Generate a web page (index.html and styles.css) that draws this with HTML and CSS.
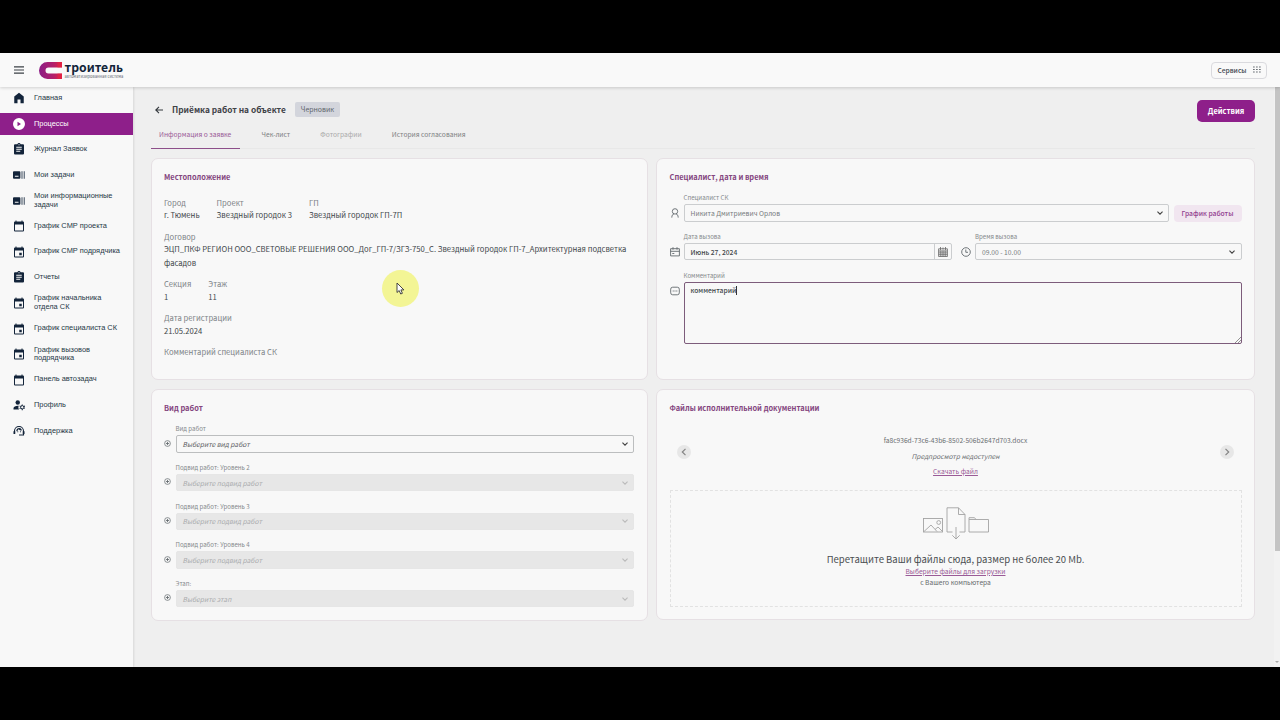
FILE: index.html
```
<!DOCTYPE html>
<html lang="ru">
<head>
<meta charset="utf-8">
<title>Приёмка работ на объекте</title>
<link rel="stylesheet" href="styles.css">
</head>
<body>
<svg class="defs" width="0" height="0">
  <defs>
    <linearGradient id="magnet" x1="0" x2="1"><stop offset="0" stop-color="#8c1d86"/><stop offset=".6" stop-color="#b01f6c"/><stop offset="1" stop-color="#e02045"/></linearGradient>
    <symbol id="i-home" viewBox="0 0 24 24"><path d="M12 1.500 2.500 9V22.500H9V15h6v7.500h6.500V9z"/></symbol>
    <symbol id="i-play" viewBox="0 0 24 24"><path fill-rule="evenodd" d="M12 0a12 12 0 1 0 0 24a12 12 0 0 0 0-24zM9 7.500v9l7-4.500z"/></symbol>
    <symbol id="i-clip" viewBox="0 0 24 24"><path fill-rule="evenodd" d="M20 2.500h-4.700a3.400 3.400 0 0 0-6.600 0H4a2 2 0 0 0-2 2V21a2 2 0 0 0 2 2h16a2 2 0 0 0 2-2V4.500a2 2 0 0 0-2-2zM11 2.500h2v2h-2zM6.500 7.500h11v2h-11zM6.500 11.500h11v2h-11zM6.500 15.500h8v2h-8z"/></symbol>
    <symbol id="i-tasks" viewBox="0 0 26 24"><path fill-rule="evenodd" d="M2 4h12a2 2 0 0 1 2 2v12a2 2 0 0 1-2 2H2a2 2 0 0 1-2-2V6a2 2 0 0 1 2-2zM4 13.500h8v2.500H4z"/><path opacity=".6" d="M18 4h3v16h-3zM23 4h3v16h-3z"/></symbol>
    <symbol id="i-cal" viewBox="0 0 24 24"><path fill-rule="evenodd" d="M5 1h2v2h10V1h2v2h1a2 2 0 0 1 2 2v16a2 2 0 0 1-2 2H4a2 2 0 0 1-2-2V5a2 2 0 0 1 2-2h1zM4 9v12h16V9z"/></symbol>
    <symbol id="i-event" viewBox="0 0 24 24"><path fill-rule="evenodd" d="M5 1h2v2h10V1h2v2h1a2 2 0 0 1 2 2v16a2 2 0 0 1-2 2H4a2 2 0 0 1-2-2V5a2 2 0 0 1 2-2h1zM4 9v12h16V9zM12.500 13.500h5v5h-5z"/></symbol>
    <symbol id="i-user" viewBox="0 0 24 24"><circle cx="9.500" cy="7" r="4.500"/><path d="M1 21v-2.500c0-3 4-5 9-5h1.500c-1.200 2.300-1 5 .5 7.500z"/><circle cx="18.500" cy="16.500" r="3.300" fill="none" stroke="currentColor" stroke-width="2"/><path d="M17.500 11h2v2h-2zM17.500 20h2v2.300h-2zM12.800 14.500l1-1.700 2 1-1 1.700zM21.300 18.600l1-1.700 2 1-1 1.700zM12.800 18.500l2-1.200 1 1.700-2 1.200zM21.300 14.200l2-1.200 1 1.700-2 1.200z"/></symbol>
    <symbol id="i-support" viewBox="0 0 24 24"><path fill="none" stroke="currentColor" stroke-width="2.200" d="M3 16v-4a9 9 0 0 1 18 0v8h-9"/><path d="M1 12.500h3.500V18H1zM19.500 12.500H23V18h-3.500z"/><path d="M6.500 12.500c.3-4 2.500-6.300 6-6.300 2.700 0 4.700 1.700 5.200 4.800-3 0-5-1-6.400-3.200-.7 2.200-2.300 3.900-4.800 4.700z"/><circle cx="9.500" cy="13.500" r="1.200"/><circle cx="15" cy="13.500" r="1.200"/></symbol>
    <symbol id="i-chev" viewBox="0 0 10 10"><path fill="none" stroke="currentColor" stroke-width="1.400" d="M1.800 3.200 5 6.400 8.200 3.200"/></symbol>
    <symbol id="i-plus" viewBox="0 0 14 14"><circle cx="7" cy="7" r="5.800" fill="none" stroke="currentColor" stroke-width="1.400"/><path fill="none" stroke="currentColor" stroke-width="1.700" d="M7 3.800v6.400M3.800 7h6.400"/></symbol>
    <symbol id="i-person" viewBox="0 0 10 10"><g fill="none" stroke="currentColor" stroke-width=".9"><circle cx="5" cy="3.400" r="2.700"/><path d="M1.800 9.600c0-2.300 1-3.400 2.200-3.800M8.200 9.600c0-2.300-1-3.400-2.200-3.800"/></g></symbol>
    <symbol id="i-date" viewBox="0 0 10 10"><g fill="none" stroke="currentColor" stroke-width=".9"><path d="M.6 1.700h8.800v7.200H.6zM.6 4.300h8.800M3 .2v2.500M7 .2v2.500M2.300 6.500h2"/></g></symbol>
    <symbol id="i-clock" viewBox="0 0 10 10"><g fill="none" stroke="currentColor" stroke-width=".9"><circle cx="5" cy="5" r="4.300"/><path d="M4.800 2.500v2.800h2.200"/></g></symbol>
    <symbol id="i-note" viewBox="0 0 10 10"><rect x=".7" y="1.200" width="8.600" height="7.600" rx="2" fill="none" stroke="currentColor" stroke-width=".9"/><path d="M2.700 4.500h1v1h-1zM4.500 4.500h1v1h-1zM6.300 4.500h1v1h-1z"/></symbol>
    <symbol id="i-month" viewBox="0 0 10 10"><path fill="none" stroke="currentColor" stroke-width=".8" d="M.6 1.800h8.800v7.700H.6zM2.500 0v3M7.500 0v3M5 .5v2M.6 4h8.800M.6 5.900h8.800M.6 7.700h8.800M2.800 3.500v6M5 3.500v6M7.200 3.500v6"/></symbol>
  </defs>
</svg>

<div class="app">
  <header class="topbar">
    <svg class="burger" viewBox="0 0 10 8"><path d="M0 .9h10M0 4h10M0 7.100h10" stroke="#3b4046" stroke-width="1.100"/></svg>
    <div class="logo">
      <svg class="logo-mark" viewBox="0 0 23 17"><path fill="url(#magnet)" d="M8.500 0H23v5.500H9.500a3 3 0 0 0 0 6H23V17H8.500a8.500 8.500 0 0 1 0-17z"/><path fill="#e8243f" d="M18.500 11.500H23V17h-4.500zM18.500 0H23v5.500h-4.500z" opacity=".55"/></svg>
      <div class="logo-text"><span class="logo-name">троитель</span><span class="logo-sub">автоматизированная система</span></div>
    </div>
    <div class="services">Сервисы <svg viewBox="0 0 8 7"><path d="M.2 1h7.600M.2 3.500h7.600M.2 6h7.600" stroke="#4a5058" stroke-width="1.100" stroke-dasharray="1.400 1.600"/></svg></div>
  </header>

  <div class="body">
    <nav class="sidebar">
      <a class="item"><svg><use href="#i-home"/></svg><span>Главная</span></a>
      <a class="item active"><svg><use href="#i-play"/></svg><span>Процессы</span></a>
      <a class="item"><svg><use href="#i-clip"/></svg><span>Журнал Заявок</span></a>
      <a class="item"><svg><use href="#i-tasks"/></svg><span>Мои задачи</span></a>
      <a class="item"><svg><use href="#i-tasks"/></svg><span>Мои информационные<br>задачи</span></a>
      <a class="item"><svg><use href="#i-cal"/></svg><span>График СМР проекта</span></a>
      <a class="item"><svg><use href="#i-event"/></svg><span>График СМР подрядчика</span></a>
      <a class="item"><svg><use href="#i-clip"/></svg><span>Отчеты</span></a>
      <a class="item"><svg><use href="#i-event"/></svg><span>График начальника<br>отдела СК</span></a>
      <a class="item"><svg><use href="#i-event"/></svg><span>График специалиста СК</span></a>
      <a class="item"><svg><use href="#i-event"/></svg><span>График вызовов<br>подрядчика</span></a>
      <a class="item"><svg><use href="#i-cal"/></svg><span>Панель автозадач</span></a>
      <a class="item"><svg><use href="#i-user"/></svg><span>Профиль</span></a>
      <a class="item"><svg><use href="#i-support"/></svg><span>Поддержка</span></a>
    </nav>

    <main class="main">
      <div class="heading">
        <svg class="back" viewBox="0 0 8 8"><path d="M8 4H1M4 .8.8 4 4 7.200" fill="none" stroke="#33383d" stroke-width="1.100"/></svg>
        <h1>Приёмка работ на объекте</h1>
        <span class="badge">Черновик</span>
        <button class="btn-primary">Действия</button>
      </div>
      <div class="tabs">
        <span class="tab current">Информация о заявке</span>
        <span class="tab t2">Чек-лист</span>
        <span class="tab t3">Фотографии</span>
        <span class="tab t4">История согласования</span>
      </div>

      <div class="cards">
        <section class="card left">
          <h2>Местоположение</h2>
          <div class="info">
            <div class="row">
              <dl><dt>Город</dt><dd>г. Тюмень</dd></dl>
              <dl><dt>Проект</dt><dd>Звездный городок 3</dd></dl>
              <dl><dt>ГП</dt><dd>Звездный городок ГП-7П</dd></dl>
            </div>
            <dl><dt>Договор</dt><dd>ЭЦП_ПКФ РЕГИОН ООО_СВЕТОВЫЕ РЕШЕНИЯ ООО_Дог_ГП-7/ЗГЗ-750_С. Звездный городок ГП-7_Архитектурная подсветка<br>фасадов</dd></dl>
            <div class="row">
              <dl><dt>Секция</dt><dd>1</dd></dl>
              <dl><dt>Этаж</dt><dd>11</dd></dl>
            </div>
            <dl><dt>Дата регистрации</dt><dd>21.05.2024</dd></dl>
            <dl><dt>Комментарий специалиста СК</dt></dl>
          </div>
        </section>

        <section class="card">
          <h2>Специалист, дата и время</h2>
          <div class="form">
            <div class="line">
              <svg class="ficon"><use href="#i-person"/></svg>
              <div class="field grow"><label>Специалист СК</label><div class="box muted">Никита Дмитриевич Орлов<svg class="chev"><use href="#i-chev"/></svg></div></div>
              <button class="btn-soft">График работы</button>
            </div>
            <div class="line">
              <svg class="ficon"><use href="#i-date"/></svg>
              <div class="field date"><label>Дата вызова</label><div class="box strong">Июнь 27, 2024<span class="addon"><svg><use href="#i-month"/></svg></span></div></div>
              <svg class="ficon clock"><use href="#i-clock"/></svg>
              <div class="field grow"><label>Время вызова</label><div class="box muted">09.00 - 10.00<svg class="chev"><use href="#i-chev"/></svg></div></div>
            </div>
            <div class="line">
              <svg class="ficon top"><use href="#i-note"/></svg>
              <div class="field grow"><label>Комментарий</label><div class="area"><span class="typed">комментарий</span><svg class="grip" viewBox="0 0 6 6"><path d="M0 6 6 0M3 6 6 3" stroke="#666" stroke-width=".7"/></svg></div></div>
            </div>
          </div>
        </section>

        <section class="card left works">
          <h2>Вид работ</h2>
          <div class="form">
            <div class="line"><svg class="ficon"><use href="#i-plus"/></svg><div class="field grow"><label>Вид работ</label><div class="box dark">Выберите вид работ<svg class="chev"><use href="#i-chev"/></svg></div></div></div>
            <div class="line"><svg class="ficon"><use href="#i-plus"/></svg><div class="field grow"><label>Подвид работ: Уровень 2</label><div class="box off">Выберите подвид работ<svg class="chev"><use href="#i-chev"/></svg></div></div></div>
            <div class="line"><svg class="ficon"><use href="#i-plus"/></svg><div class="field grow"><label>Подвид работ: Уровень 3</label><div class="box off">Выберите подвид работ<svg class="chev"><use href="#i-chev"/></svg></div></div></div>
            <div class="line"><svg class="ficon"><use href="#i-plus"/></svg><div class="field grow"><label>Подвид работ: Уровень 4</label><div class="box off">Выберите подвид работ<svg class="chev"><use href="#i-chev"/></svg></div></div></div>
            <div class="line"><svg class="ficon"><use href="#i-plus"/></svg><div class="field grow"><label>Этап:</label><div class="box off">Выберите этап<svg class="chev"><use href="#i-chev"/></svg></div></div></div>
          </div>
        </section>

        <section class="card files">
          <h2>Файлы исполнительной документации</h2>
          <div class="carousel">
            <span class="nav"><svg viewBox="0 0 8 8"><path d="M5.500.8 2.300 4l3.200 3.200"/></svg></span>
            <div class="file"><span>fa8c936d-73c6-43b6-8502-506b2647d703.docx</span><em>Предпросмотр недоступен</em><a>Скачать файл</a></div>
            <span class="nav"><svg viewBox="0 0 8 8"><path d="M2.500.8 5.700 4 2.500 7.200"/></svg></span>
          </div>
          <div class="drop">
            <svg class="drop-art" viewBox="0 0 66 33"><g fill="none" stroke="#a3a3a3" stroke-width=".9"><rect x=".5" y="11.500" width="19" height="13.500"/><circle cx="15.700" cy="15.500" r="1.900"/><path d="m1 24.500 7-6.500 6 6.500M12 22.500l3-2.500 4.500 4.500M29.500 25H24V.8h11.500L42 7.500V25h-5.500M35.500.8v6.700H42M33 20v12M29.300 28.300 33 32l3.700-3.700M46 25V10.700h5.500l1.500 1.800h12.500V25zM46 12.500h7"/></g></svg>
            <p class="drop-title">Перетащите Ваши файлы сюда, размер не более 20 Mb.</p>
            <a>Выберите файлы для загрузки</a>
            <p class="drop-note">с Вашего компьютера</p>
          </div>
        </section>
      </div>
    </main>
    <div class="scroll"><span class="thumb"></span><span class="down"></span></div>
  </div>

  <div class="pointer"><svg viewBox="0 0 9 13"><path d="M1 1v9.500l2.200-2 1.500 3.500 1.700-.7-1.500-3.400h3z" fill="#fff" stroke="#333" stroke-width=".9"/></svg></div>
</div>
</body>
</html>
```
FILE: styles.css
```
* { box-sizing: border-box; }
body { margin: 0; background: #000; height: 720px; overflow: hidden; padding-top: 53px;
  font-family: "Noto Sans CJK JP", "Noto Sans", sans-serif; font-size: 7.65px; color: #41474b; }
h1, h2, p, dl, dd { margin: 0; }
button { font-family: inherit; border: 0; padding: 0; }
.defs { position: absolute; }
svg { fill: currentColor; flex: none; }

.app { position: relative; width: 1280px; height: 614px; background: #efefef; display: flex; flex-direction: column; overflow: hidden; }
.topbar { height: 34px; flex: none; background: #f9f9f9; display: flex; align-items: center; padding: 0 13px 0 14px; box-shadow: 0 1px 3px rgba(0,0,0,.16); z-index: 2; }
.burger { width: 10px; height: 8px; }
.logo { display: flex; gap: 3px; margin-left: 14.500px; align-items: center; }
.logo-mark { width: 23px; height: 17px; }
.logo-text { display: flex; flex-direction: column; color: #12253a; margin-top: -1px; }
.logo-name { font-size: 12.2px; font-weight: 700; line-height: 13px; }
.logo-sub { font-size: 4px; line-height: 4px; color: #5d6670; white-space: nowrap; }
.services { margin-left: auto; width: 56px; height: 17px; border: 1px solid #dadade; border-radius: 4px; display: flex; align-items: center; justify-content: center; gap: 6px; font-size: 6.700px; font-weight: 500; color: #3f4750; white-space: nowrap; }
.services svg { width: 8px; height: 7px; margin-top: -1px; }

.body { flex: 1; display: flex; min-height: 0; }
.sidebar { width: 133px; flex: none; background: #f8f8f8; margin-right: 1px; box-shadow: 1px 0 2px rgba(0,0,0,.1); }
.item { display: flex; align-items: center; height: 25.600px; padding-left: 13px; color: #13243a; font: 7.41px/8.600px "Liberation Sans", sans-serif; }
.item:first-child { margin-top: -1.600px; }
.item svg { width: 12px; height: 12px; margin-right: 9px; }
.item span { color: #263847; white-space: nowrap; }
.item.active { height: 21.600px; margin: 2px 0; background: #8e1f8a; color: #fff; }
.item.active span { color: #fff; }

.main { flex: 1; padding: 10px 19px 0 17px; }
.heading { display: flex; align-items: center; height: 26px; padding-left: 4px; }
.back { width: 8px; height: 8px; margin-right: 9px; margin-top: -1px; }
h1 { font-size: 8.340px; font-weight: 700; color: #3f4247; line-height: 14px; width: 114px; white-space: nowrap; margin-top: -2px; }
.badge { margin: -2px 0 0 9px; width: 45px; height: 15px; border-radius: 2px; background: #d3d5dc; color: #5f656d; font-size: 6.900px; line-height: 14px; text-align: center; }
.btn-primary { margin-left: auto; width: 58px; height: 22px; border-radius: 5px; background: #8e1f8a; color: #fff; font-weight: 700; font-size: 7.450px; line-height: 19px; padding-bottom: 2px; margin-top: 2px; }
.tabs { height: 26px; display: flex; border-bottom: 1px solid #e8e8e8; font-size: 6.670px; line-height: 23px; color: #7d7f82; white-space: nowrap; }
.tab { padding: 0 8px; height: 26px; }
.tab.current { width: 89px; color: #9a5a96; border-bottom: 1px solid #8d4f8a; }
.t2 { margin-left: 13.500px; }
.t3 { margin-left: 14px; color: #aaa; }
.t4 { margin-left: 14.200px; }

.cards { display: grid; grid-template-columns: 497px 599px; grid-template-rows: 222px 232px; gap: 9px 8px; margin-top: 9px; }
.card { background: #f8f8f8; border: 1px solid #e6e0e4; border-radius: 7px; padding: 11px 12.500px 0; }
.left { padding: 11px 13px 0 12px; }
.files { height: 231px; }
h2 { font-size: 7.440px; font-weight: 700; line-height: 14px; color: #84467f; white-space: nowrap; }
.info { margin-top: 12.500px; display: flex; flex-direction: column; gap: 9px; white-space: nowrap; }
.row { display: flex; gap: 17px; }
dt { line-height: 12.600px; color: #7c8286; }
dd { line-height: 13.200px; margin: -.8px 0 0; }

.form { margin-top: 9.300px; display: flex; flex-direction: column; gap: 10.300px; }
.line { display: flex; align-items: flex-end; }
.ficon { width: 10px; height: 10px; margin: 0 4px 3.500px 0; color: #62696d; }
.ficon.top { align-self: flex-start; margin-top: 15px; }
.ficon.clock { margin: 0 4.500px 3.500px 9px; }
.grow { flex: 1; }
.date { width: 268px; }
label { display: block; font-size: 6.100px; line-height: 9px; margin-bottom: 2px; color: #85898c; white-space: nowrap; }
.box { height: 17.400px; border: 1px solid #cbcdcf; border-radius: 2px; display: flex; align-items: center; padding: 0 0 0 6px; font-size: 6.720px; line-height: 12px; white-space: nowrap; }
.muted { color: #777b7e; }
.strong { color: #43484b; font-weight: 500; }
.chev { width: 8px; height: 8px; margin-left: auto; margin-right: 4.500px; color: #444; }
.addon { margin: 0 0 0 auto; width: 17px; height: 100%; border-left: 1px solid #cbcdcf; display: flex; align-items: center; justify-content: center; color: #666; }
.addon svg { width: 10px; height: 10px; }
.btn-soft { width: 68px; height: 17px; margin-left: 4.500px; background: #f1e6f0; color: #92408f; border-radius: 4px; font-weight: 500; font-size: 6.750px; line-height: 15px; white-space: nowrap; }
.area { position: relative; height: 62px; border: 1px solid #7d5c7b; border-radius: 2px; padding: 1px 6px; font-weight: 500; font-size: 6.720px; line-height: 13px; }
.typed { border-right: 1px solid #333; display: inline-block; line-height: 9px; }
.grip { position: absolute; right: 0; bottom: 0; width: 6px; height: 6px; }

.works .ficon { width: 7px; height: 7px; margin: 0 4.500px 6px 0; }
.works .box { font-style: italic; }
.works .dark { border-color: #bcbebf; color: #5c6063; }
.works .off { border-color: #e6e6e6; background: #e7e7e7; color: #aaacae; }
.off .chev { color: #bbb; }

.carousel { display: flex; justify-content: space-between; padding: 0 7px; height: 75px; }
.nav { width: 14px; height: 14px; margin-top: 30px; border-radius: 50%; background: #e7e7e7; display: flex; align-items: center; justify-content: center; }
.nav svg { width: 8px; height: 8px; fill: none; stroke: #858585; stroke-width: 1.200; }
.file { display: flex; flex-direction: column; align-items: center; padding-top: 17px; font-size: 6.670px; line-height: 16px; color: #6a6e71; }
.file a { line-height: 14px; }
a { color: #9a5b97; }
.file a, .drop a { text-decoration: underline; text-underline-offset: 1px; }
.drop { height: 117px; border: 1px dashed #e2e2e2; display: flex; flex-direction: column; align-items: center; font-size: 6.670px; }
.drop-art { width: 66px; height: 33px; margin-top: 16px; }
.drop-title { font-size: 9.530px; line-height: 16px; margin-top: 11px; color: #4a4e51; }
.drop a { line-height: 9px; }
.drop-note { line-height: 13px; color: #666a6d; }

.scroll { width: 6px; position: relative; display: flex; flex-direction: column; align-items: center; background: #f2f2f2; }
.thumb { width: 5px; height: 464px; background: #c4c4c4; }
.down { margin-top: auto; margin-bottom: 4px; border: 2px solid transparent; border-top-color: #aaa; border-bottom: 0; }
.pointer { position: absolute; left: 382px; top: 216.500px; width: 37px; height: 37px; border-radius: 50%; background: #f3f595; }
.pointer svg { position: absolute; left: 14px; top: 12px; width: 9px; height: 13px; }
```
